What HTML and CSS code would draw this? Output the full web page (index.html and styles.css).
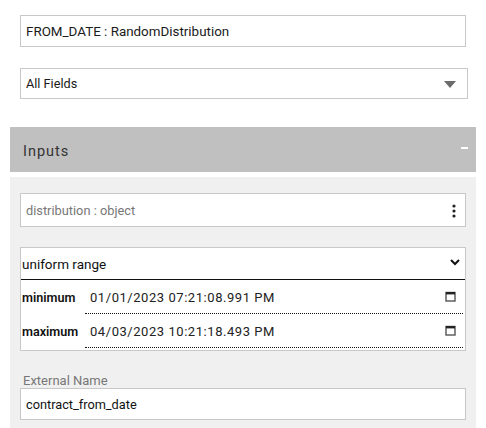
FILE: index.html
```html
<!DOCTYPE html>
<html>
<head>
<meta charset="utf-8">
<link rel="stylesheet" href="styles.css">
</head>
<body>
<div class="page">
  <div class="top">
    <div class="field title-field">FROM_DATE : RandomDistribution</div>
    <div class="field filter-field">
      <span>All Fields</span>
      <svg class="tri" width="12" height="8" viewBox="0 0 12 8"><path d="M0 0H12L6 7Z" fill="#6b6b6b"/></svg>
    </div>
  </div>
  <div class="section-head">
    <span class="section-title">Inputs</span>
    <span class="minus"></span>
  </div>
  <div class="panel">
    <div class="field dist-field">
      <span>distribution : object</span>
      <svg class="kebab" width="4" height="14" viewBox="0 0 4 14"><circle cx="2" cy="2" r="1.6" fill="#222"/><circle cx="2" cy="7" r="1.6" fill="#222"/><circle cx="2" cy="12" r="1.6" fill="#222"/></svg>
    </div>
    <div class="combo">
      <div class="combo-select">
        <span>uniform range</span>
        <svg class="chev" width="10" height="7" viewBox="0 0 10 7"><path d="M1 1L5 5L9 1" stroke="#111" stroke-width="2" fill="none"/></svg>
      </div>
      <div class="row">
        <span class="row-label">minimum</span>
        <div class="row-value">
          <span class="date">01/01/2023 07:21:08.991 PM</span>
          <svg class="cal" width="11" height="11" viewBox="0 0 11 11"><rect x="1" y="1.5" width="9" height="8.5" fill="none" stroke="#555" stroke-width="1.4"/><rect x="1" y="1" width="9" height="2.4" fill="#222"/></svg>
        </div>
      </div>
      <div class="row">
        <span class="row-label">maximum</span>
        <div class="row-value">
          <span class="date">04/03/2023 10:21:18.493 PM</span>
          <svg class="cal" width="11" height="11" viewBox="0 0 11 11"><rect x="1" y="1.5" width="9" height="8.5" fill="none" stroke="#555" stroke-width="1.4"/><rect x="1" y="1" width="9" height="2.4" fill="#222"/></svg>
        </div>
      </div>
    </div>
    <div class="ext-label">External Name</div>
    <div class="field ext-field">contract_from_date</div>
  </div>
</div>
</body>
</html>
```

FILE: styles.css
```css
html, body {
  margin: 0;
  padding: 0;
  background: #fff;
  font-family: Roboto, "Liberation Sans", Arial, sans-serif;
}
.page {
  width: 486px;
  height: 428px;
  overflow: hidden;
}
.top {
  padding: 15px 0 0 20px;
  display: flex;
  flex-direction: column;
}
.field {
  box-sizing: border-box;
  border: 1px solid #c8c8c8;
  background: #fff;
  display: flex;
  align-items: center;
  padding-left: 5px;
  font-size: 13px;
  color: #1a1a1a;
}
.title-field {
  width: 446px;
  height: 32px;
  font-size: 13.4px;
}
.filter-field {
  width: 448px;
  height: 31px;
  margin-top: 21px;
  font-size: 12.7px;
  justify-content: space-between;
  padding-right: 11px;
}
.tri {
  margin-top: 3px;
}
.section-head {
  margin: 28px 0 0 10px;
  width: 466px;
  height: 45px;
  background: #c0c0c0;
  display: flex;
  align-items: center;
  justify-content: space-between;
  box-sizing: border-box;
  padding: 0 8px 0 13px;
}
.section-title {
  font-size: 14.5px;
  letter-spacing: 1px;
  color: #333;
  margin-top: 3px;
}
.minus {
  width: 7px;
  height: 2px;
  background: #fff;
  margin-top: -4px;
}
.panel {
  margin: 5px 0 0 10px;
  width: 466px;
  height: 260px;
  background: #f0f0f0;
  box-sizing: border-box;
  padding: 16px 10px 0 10px;
  display: flex;
  flex-direction: column;
}
.dist-field {
  height: 34px;
  color: #777;
  font-size: 12.8px;
  justify-content: space-between;
  padding-right: 9px;
}
.kebab {
  margin-top: 1px;
}
.combo {
  margin-top: 20px;
  box-sizing: border-box;
  border: 1px solid #c8c8c8;
  background: #fff;
  height: 104px;
  display: flex;
  flex-direction: column;
}
.combo-select {
  height: 31px;
  border-bottom: 1px solid #111;
  display: flex;
  align-items: center;
  justify-content: space-between;
  padding: 0 5px 0 1px;
  font-size: 13.5px;
  color: #111;
}
.chev {
  margin-top: -2px;
}
.row {
  display: flex;
  align-items: stretch;
  height: 34px;
}
.row-label {
  width: 64px;
  font-size: 12.6px;
  font-weight: 600;
  color: #111;
  display: flex;
  align-items: center;
  padding-left: 1px;
  padding-top: 1px;
  box-sizing: border-box;
}
.row-value {
  flex: 1;
  margin-right: 2px;
  border-bottom: 1px dotted #111;
  display: flex;
  align-items: center;
  justify-content: space-between;
  padding: 1px 7px 0 5px;
}
.date {
  font-size: 13px;
  letter-spacing: 0.55px;
  color: #222;
}
.cal {
  margin-top: -1px;
}
.ext-label {
  margin-top: 22px;
  font-size: 13px;
  color: #777;
  padding-left: 3px;
  line-height: 15px;
}
.ext-field {
  height: 32px;
  font-size: 12.75px;
  color: #111;
}
```
